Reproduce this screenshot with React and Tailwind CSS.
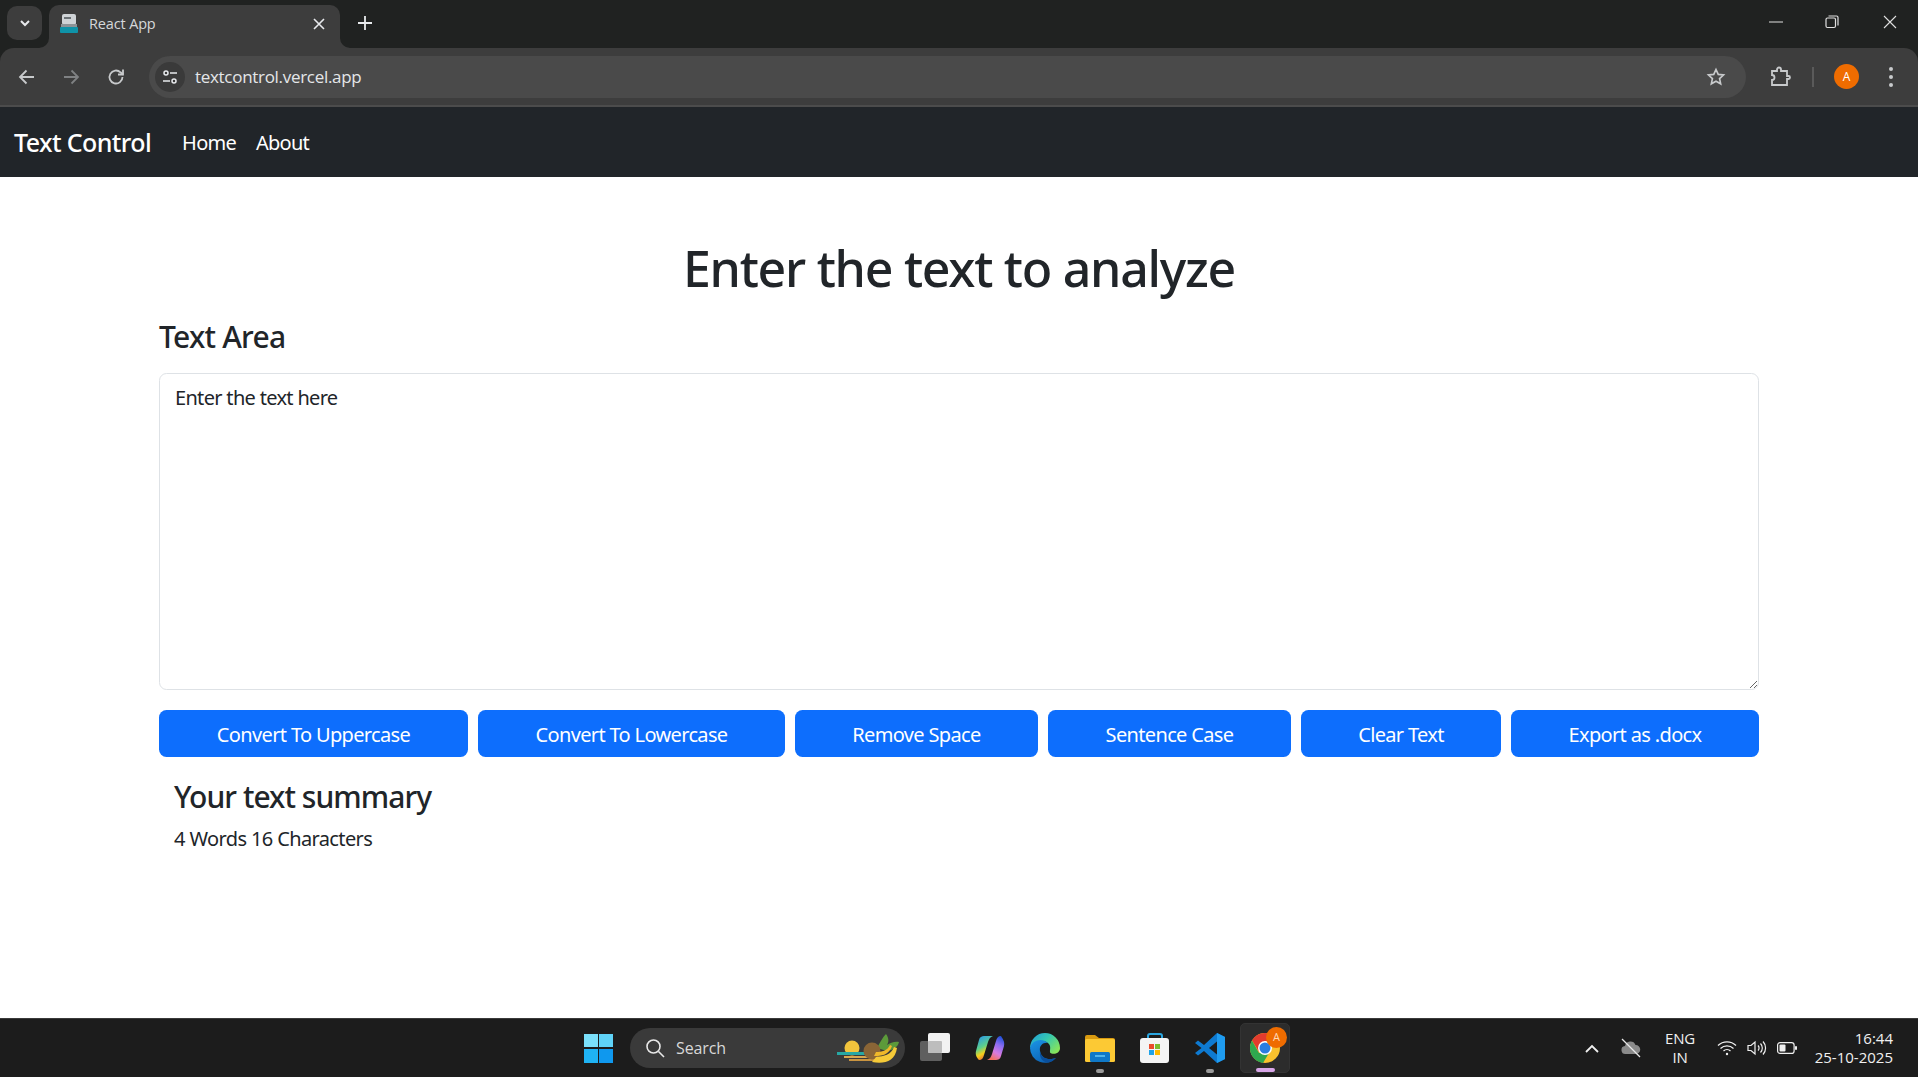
import React from "react";

const F = "font-['Noto_Sans','Open_Sans',sans-serif]";

function Flare({ side }) {
  return (
    <svg width="10" height="10" viewBox="0 0 10 10" className={side === "l" ? "absolute left-[-10px] bottom-0" : "absolute right-[-10px] bottom-0"}>
      {side === "l" ? <path d="M10 0V10H0A10 10 0 0 0 10 0Z" fill="#3d3d3d" /> : <path d="M0 0V10H10A10 10 0 0 1 0 0Z" fill="#3d3d3d" />}
    </svg>
  );
}

function TabStrip() {
  return (
    <div className="h-[48px] bg-[#202221] flex items-end pl-[7px] relative shrink-0">
      <div className="w-[35px] h-[34px] rounded-[10px] bg-[#3d3d3d] flex items-center justify-center self-start mt-[6px]">
        <svg width="14" height="14" viewBox="0 0 14 14" fill="none" stroke="#e8eaed" strokeWidth="2"><path d="M3 5l4 4 4-4" /></svg>
      </div>
      <div className="relative ml-[7px] w-[291px] h-[43px] bg-[#3d3d3d] rounded-t-[10px] flex items-center pl-[11px] pr-[15px] pb-[5px]">
        <Flare side="l" />
        <Flare side="r" />
        <svg width="18" height="20" viewBox="0 0 18 20">
          <rect x="2" y="0" width="14" height="11" rx="2" fill="#cfd3d6" />
          <rect x="4" y="3" width="7" height="2" fill="#6b7175" />
          <rect x="1" y="10" width="16" height="4" fill="#8d9397" />
          <rect x="0" y="13" width="18" height="6" rx="1" fill="#0f93a8" />
        </svg>
        <span className="ml-[11px] text-[14.5px] text-[#d6d8da] font-['Open_Sans',sans-serif] tracking-[-0.15px] flex-1">React App</span>
        <svg width="12" height="12" viewBox="0 0 12 12" stroke="#e8eaed" strokeWidth="1.6"><path d="M1 1l10 10M11 1L1 11" /></svg>
      </div>
      <svg width="14" height="14" viewBox="0 0 14 14" stroke="#e8eaed" strokeWidth="1.8" className="ml-[18px] self-start mt-[16px]"><path d="M7 0v14M0 7h14" /></svg>
      <div className="ml-auto self-start flex items-center h-[44px] text-[#e8eaed]">
        <svg width="14" height="14" viewBox="0 0 14 14" stroke="#e0e0e0" strokeWidth="1"><path d="M0 7h14" /></svg>
        <svg width="14" height="14" viewBox="0 0 14 14" fill="none" stroke="#e0e0e0" strokeWidth="1.2" className="ml-[42px]"><rect x="1" y="3" width="9.5" height="9.5" rx="1.5" /><path d="M3.500 1h8a1.500 1.500 0 0 1 1.500 1.500v8" /></svg>
        <svg width="14" height="14" viewBox="0 0 14 14" stroke="#e0e0e0" strokeWidth="1.1" className="ml-[44px] mr-[21px]"><path d="M1 1l12 12M13 1L1 13" /></svg>
      </div>
    </div>
  );
}

function Toolbar() {
  return (
    <div className="h-[59px] bg-[#3d3d3d] rounded-t-[14px] border-b-[2px] border-[#4c4c4c] flex items-center relative shrink-0">
      <svg width="20" height="20" viewBox="0 0 20 20" fill="none" stroke="#c8cacc" strokeWidth="1.8" className="ml-[17px]"><path d="M17 10H3M9.500 3.500L3 10l6.500 6.500" /></svg>
      <svg width="20" height="20" viewBox="0 0 20 20" fill="none" stroke="#7f8183" strokeWidth="1.8" className="ml-[24px]"><path d="M3 10h14M10.500 3.500L17 10l-6.500 6.500" /></svg>
      <svg width="20" height="20" viewBox="0 0 20 20" fill="none" stroke="#c8cacc" strokeWidth="1.8" className="ml-[25px]"><path d="M16.500 10a6.500 6.500 0 1 1-2-4.700L17 7.500" /><path d="M17 2.500v5h-5" /></svg>
      <div className="ml-[23px] w-[1597px] h-[42px] bg-[#4a4a4a] rounded-[21px] flex items-center pl-[6px] pr-[20px]">
        <div className="w-[30px] h-[30px] rounded-full bg-[#3a3a3a] flex items-center justify-center">
          <svg width="18" height="18" viewBox="0 0 18 18" fill="none" stroke="#e8eaed" strokeWidth="1.5"><circle cx="5" cy="5" r="2" /><path d="M9 5h7M2 13h7" /><circle cx="13" cy="13" r="2" /></svg>
        </div>
        <span className="ml-[10px] text-[17px] text-[#e4e6e8] font-['Open_Sans',sans-serif] tracking-[-0.3px]">textcontrol.vercel.app</span>
        <svg width="20" height="20" viewBox="0 0 24 24" fill="none" stroke="#c8cacc" strokeWidth="2" className="ml-auto"><path d="M12 3l2.700 5.900 6.300.7-4.700 4.300 1.300 6.300L12 17.100l-5.600 3.100 1.300-6.300L3 9.600l6.300-.7z" /></svg>
      </div>
      <svg width="22" height="22" viewBox="0 0 22 22" fill="none" stroke="#c8cacc" strokeWidth="1.8" className="ml-[23px]"><path d="M3 5h5V3.500a2 2 0 0 1 4 0V5h6v5h1.500a1.500 1.500 0 0 1 0 3H18v6H3v-5a2.500 2.500 0 0 0 0-5z" /></svg>
      <div className="ml-[21px] w-[2px] h-[20px] bg-[#5a5a5a]" />
      <div className="ml-[20px] w-[25px] h-[25px] rounded-full bg-[#ef6c00] text-white text-[12px] flex items-center justify-center font-['Open_Sans',sans-serif]">A</div>
      <div className="ml-[30px] flex flex-col gap-[4px]">
        <span className="block w-[4px] h-[4px] rounded-full bg-[#c8cacc]" />
        <span className="block w-[4px] h-[4px] rounded-full bg-[#c8cacc]" />
        <span className="block w-[4px] h-[4px] rounded-full bg-[#c8cacc]" />
      </div>
    </div>
  );
}

function Navbar() {
  return (
    <nav className={`h-[70px] bg-[#212529] flex items-center pl-[14px] pt-[2px] shrink-0 ${F}`}>
      <span className="text-[25px] text-white font-medium tracking-[-0.6px]">Text Control</span>
      <span className="ml-[31px] text-[20px] text-white tracking-[-0.75px]">Home</span>
      <span className="ml-[20px] text-[20px] text-white tracking-[-0.75px]">About</span>
    </nav>
  );
}

const buttons = [
  ["Convert To Uppercase", "w-[309px]"],
  ["Convert To Lowercase", "w-[307px]"],
  ["Remove Space", "w-[243px]"],
  ["Sentence Case", "w-[243px]"],
  ["Clear Text", "w-[200px]"],
  ["Export as .docx", "w-[248px]"],
];

function Main() {
  return (
    <main className={`flex-1 bg-white text-[#212529] px-[159px] ${F}`}>
      <h1 className="text-[50px] leading-[60px] font-medium text-center mt-[61px] tracking-[-1.25px]">Enter the text to analyze</h1>
      <h4 className="text-[30px] leading-[36px] font-medium mt-[21px] tracking-[-0.75px]">Text Area</h4>
      <textarea
        defaultValue="Enter the text here"
        className="block mt-[18px] w-full h-[317px] border border-[#dee2e6] rounded-[7.5px] px-[15px] py-[9px] text-[20px] leading-[30px] text-[#212529] tracking-[-0.68px] outline-none bg-white"
      />
      <div className="flex gap-[10px] mt-[20px]">
        {buttons.map(([t, w]) => (
          <button key={t} className={`${w} h-[47px] rounded-[7.5px] bg-[#0d6efd] text-white text-[20px] tracking-[-0.65px] pt-[2px]`}>{t}</button>
        ))}
      </div>
      <div className="pl-[15px] mt-[22px]">
        <h4 className="text-[30px] leading-[36px] font-medium tracking-[-0.95px]">Your text summary</h4>
        <p className="mt-[9px] text-[20px] leading-[30px] tracking-[-0.62px]">4 Words 16 Characters</p>
      </div>
    </main>
  );
}

function TaskIcons() {
  return (
    <>
      {/* task view */}
      <svg width="30" height="30" viewBox="0 0 30 30" className="ml-[15px]">
        <rect x="0" y="8" width="22" height="20" rx="2" fill="#5f5f5f" />
        <rect x="8" y="0" width="22" height="20" rx="2" fill="#f2f2f2" />
        <rect x="8" y="8" width="14" height="12" rx="1" fill="#bdbdbd" />
      </svg>
      {/* copilot */}
      <svg width="30" height="30" viewBox="0 0 30 30" className="ml-[25px]">
        <defs>
          <linearGradient id="cpa" x1="0.2" y1="0" x2="0.6" y2="1"><stop offset="0" stopColor="#2a9be8" /><stop offset="0.45" stopColor="#5fd08a" /><stop offset="0.7" stopColor="#f5d21c" /><stop offset="1" stopColor="#f0503c" /></linearGradient>
          <linearGradient id="cpb" x1="0.8" y1="0" x2="0.4" y2="1"><stop offset="0" stopColor="#1a4fd8" /><stop offset="0.35" stopColor="#8a6cf0" /><stop offset="0.7" stopColor="#d77be0" /><stop offset="1" stopColor="#f4715f" /></linearGradient>
        </defs>
        <path d="M9 3h9c-3 1-4 3-5 6l-4 13c-.8 3-2 5-5 5H4c-2-2-4-5-3-9l3-11c.6-3 3-4 5-4z" fill="url(#cpa)" />
        <path d="M21 27h-9c3-1 4-3 5-6l4-13c.8-3 2-5 5-5h0c2 3 4 6 3 10l-3 10c-.6 3-3 4-5 4z" fill="url(#cpb)" />
      </svg>
      {/* edge */}
      <svg width="30" height="30" viewBox="0 0 30 30" className="ml-[25px]">
        <defs>
          <linearGradient id="eda" x1="0" y1="0" x2="1" y2="0.7"><stop offset="0" stopColor="#1f9be0" /><stop offset="0.5" stopColor="#35c8b0" /><stop offset="1" stopColor="#86e45c" /></linearGradient>
          <linearGradient id="edb" x1="0" y1="0" x2="0.6" y2="1"><stop offset="0" stopColor="#1b95e6" /><stop offset="1" stopColor="#0c62b4" /></linearGradient>
        </defs>
        <path d="M0 15A15 15 0 0 1 30 15C30 20 25 21.500 21.500 20.500C18 19.500 22 15 19 11C15 6 5 7 0 15Z" fill="url(#eda)" />
        <path d="M0 15C2 7 12 4.500 18 10C13 9 9 13 10 18C11 25 18 28 26 25A15 15 0 0 1 0 15Z" fill="url(#edb)" />
        <path d="M10 18C11 25 18 28 26 25A15 15 0 0 1 19 29.500C13 29.500 9 25 10 18Z" fill="#0a4f9c" />
      </svg>
      {/* explorer */}
      <div className="ml-[25px] relative w-[30px] h-[30px]">
        <svg width="30" height="30" viewBox="0 0 30 30">
          <path d="M0 4a2 2 0 0 1 2-2h8l4 3h14a2 2 0 0 1 2 2v3H0z" fill="#d99a10" />
          <rect x="0" y="6" width="30" height="23" rx="1.500" fill="#fcc934" />
          <rect x="5" y="19" width="20" height="10" rx="1.500" fill="#0f78c8" />
          <rect x="10" y="22" width="10" height="2" fill="#4fb4ec" />
        </svg>
        <span className="absolute left-[11px] top-[36px] w-[8px] h-[4px] rounded-full bg-[#9a9a9a]" />
      </div>
      {/* store */}
      <svg width="30" height="30" viewBox="0 0 30 30" className="ml-[25px]">
        <path d="M8 7V3a2 2 0 0 1 2-2h10a2 2 0 0 1 2 2v4" fill="none" stroke="#2aa6e0" strokeWidth="2" />
        <rect x="0" y="5" width="29" height="25" rx="3" fill="#f4f4f4" />
        <rect x="9" y="11" width="5" height="5" fill="#ea4b2b" />
        <rect x="15" y="11" width="5" height="5" fill="#7cbb2f" />
        <rect x="9" y="17" width="5" height="5" fill="#1fa2e8" />
        <rect x="15" y="17" width="5" height="5" fill="#ffb900" />
      </svg>
      {/* vscode */}
      <div className="ml-[25px] relative w-[30px] h-[30px]">
        <svg width="30" height="30" viewBox="0 0 30 30">
          <path d="M22 0l8 4v22l-8 4L9 18l-6 4.500L0 20l6.500-5L0 10l3-2.500 6 4.500z" fill="#0e7ad1" />
          <path d="M22 0l8 4v22l-8 4z" fill="#1f9cf0" />
          <path d="M22 8.500l-8 6.500 8 6.500z" fill="#1c1c1c" />
        </svg>
        <span className="absolute left-[11px] top-[36px] w-[8px] h-[4px] rounded-full bg-[#9a9a9a]" />
      </div>
      {/* chrome */}
      <div className="ml-[15px] relative w-[50px] h-[50px] rounded-[5px] bg-[#2c2c2c] border border-[#333] flex items-center justify-center">
        <svg width="30" height="30" viewBox="0 0 30 30">
          <circle cx="15" cy="15" r="15" fill="#f9c22e" />
          <path d="M15 0A15 15 0 0 0 2 7.500L9 19 15 8h13A15 15 0 0 0 15 0z" fill="#e33b2e" />
          <path d="M2 7.500A15 15 0 0 0 13 30l6-10H9z" fill="#2fa84f" />
          <circle cx="15" cy="15" r="7" fill="#fff" />
          <circle cx="15" cy="15" r="5.500" fill="#2a7de1" />
        </svg>
        <span className="absolute right-[2px] top-[3px] w-[21px] h-[21px] rounded-full bg-[#ef6c00] text-[#ffd9b8] text-[11px] flex items-center justify-center font-['Open_Sans',sans-serif]">A</span>
        <span className="absolute left-[15px] bottom-[0px] w-[19px] h-[4px] rounded-full bg-[#d8a6e8]" />
      </div>
    </>
  );
}

function Taskbar() {
  return (
    <div className="h-[59px] bg-[#1c1c1c] border-t border-[#3a3a3a] flex items-center relative shrink-0 font-['Open_Sans',sans-serif] text-[#f0f0f0]">
      {/* windows */}
      <div className="ml-[584px] grid grid-cols-2 gap-[1.5px] w-[29px] h-[29px]">
        <span className="bg-[#7ae0fb]" />
        <span className="bg-[#5fd3f8]" />
        <span className="bg-[#1fb3f4]" />
        <span className="bg-[#0f98ee]" />
      </div>
      {/* search */}
      <div className="ml-[17px] w-[275px] h-[40px] rounded-[20px] bg-[#3a3a3a] flex items-center pl-[15px] relative">
        <svg width="20" height="20" viewBox="0 0 20 20" fill="none" stroke="#e8e8e8" strokeWidth="1.600"><circle cx="8.500" cy="8.500" r="6.500" /><path d="M13.500 13.500L19 19" /></svg>
        <span className="ml-[11px] text-[16px] text-[#d8d8d8] tracking-[-0.1px]">Search</span>
        <svg width="62" height="30" viewBox="0 0 62 30" className="absolute left-[207px] top-[5px]">
          <circle cx="15" cy="15" r="7.500" fill="#f2c43c" />
          <rect x="0" y="19" width="29" height="3" fill="#27a8a4" />
          <rect x="7" y="23" width="30" height="2" fill="#d8a850" />
          <rect x="12" y="26" width="26" height="2" fill="#c99440" />
          <path d="M40 15c3-6 6-11 9-14 3 4 3 8 1 11 3-2 8-4 12-3-1 5-6 8-12 9z" fill="#5c9a3a" />
          <circle cx="35" cy="18" r="8.500" fill="#8a6536" />
          <path d="M35 29c12 2 23 0 25-14l-3-1c-3 8-10 9-18 10z" fill="#f5ca38" />
          <path d="M37 23c8 0 15-1 18-10l-2-1c-3 6-8 7-14 7z" fill="#efb82a" />
        </svg>
      </div>
      <TaskIcons />
      {/* tray */}
      <svg width="14" height="9" viewBox="0 0 14 9" fill="none" stroke="#f0f0f0" strokeWidth="1.800" className="ml-[295px]"><path d="M1 8l6-6 6 6" /></svg>
      <svg width="22" height="20" viewBox="0 0 22 20" className="ml-[21px]">
        <path d="M6 16a4 4 0 0 1-1-8 5.500 5.500 0 0 1 10.500-1A4.500 4.500 0 0 1 16 16z" fill="#8a8a8a" />
        <path d="M2 1l18 18" stroke="#e8e8e8" strokeWidth="1.300" />
      </svg>
      <div className="ml-[20px] w-[36px] text-center text-[15px] leading-[19px] tracking-[-0.2px]">
        <div>ENG</div>
        <div>IN</div>
      </div>
      <svg width="20" height="16" viewBox="0 0 20 16" fill="none" stroke="#f0f0f0" strokeWidth="1.300" className="ml-[19px]">
        <path d="M1 5.500a13 13 0 0 1 18 0M3.500 8.500a9.500 9.500 0 0 1 13 0M6.500 11a5 5 0 0 1 7 0" />
        <circle cx="10" cy="14" r="1.200" fill="#f0f0f0" stroke="none" />
      </svg>
      <svg width="20" height="16" viewBox="0 0 20 16" fill="none" stroke="#f0f0f0" strokeWidth="1.200" className="ml-[10px]">
        <path d="M1 5.500h3l4-3.500v12l-4-3.500H1z" />
        <path d="M11 5.500a3.500 3.500 0 0 1 0 5M13.500 3.500a6.500 6.500 0 0 1 0 9M16 1.500a9.500 9.500 0 0 1 0 13" />
      </svg>
      <svg width="20" height="12" viewBox="0 0 20 12" className="ml-[10px]">
        <rect x="0.600" y="0.600" width="16.500" height="10.800" rx="2.500" fill="none" stroke="#f0f0f0" strokeWidth="1.200" />
        <rect x="2.500" y="2.500" width="6" height="7" rx="1" fill="#f0f0f0" />
        <rect x="18" y="4" width="2" height="4" rx="1" fill="#f0f0f0" />
      </svg>
      <div className="ml-[17px] w-[79px] text-right text-[15px] leading-[19px] whitespace-nowrap">
        <div>16:44</div>
        <div>25-10-2025</div>
      </div>
    </div>
  );
}

export default function App() {
  return (
    <div className="w-[1918px] h-[1077px] flex flex-col overflow-hidden bg-[#202221]">
      <TabStrip />
      <Toolbar />
      <Navbar />
      <Main />
      <Taskbar />
    </div>
  );
}
